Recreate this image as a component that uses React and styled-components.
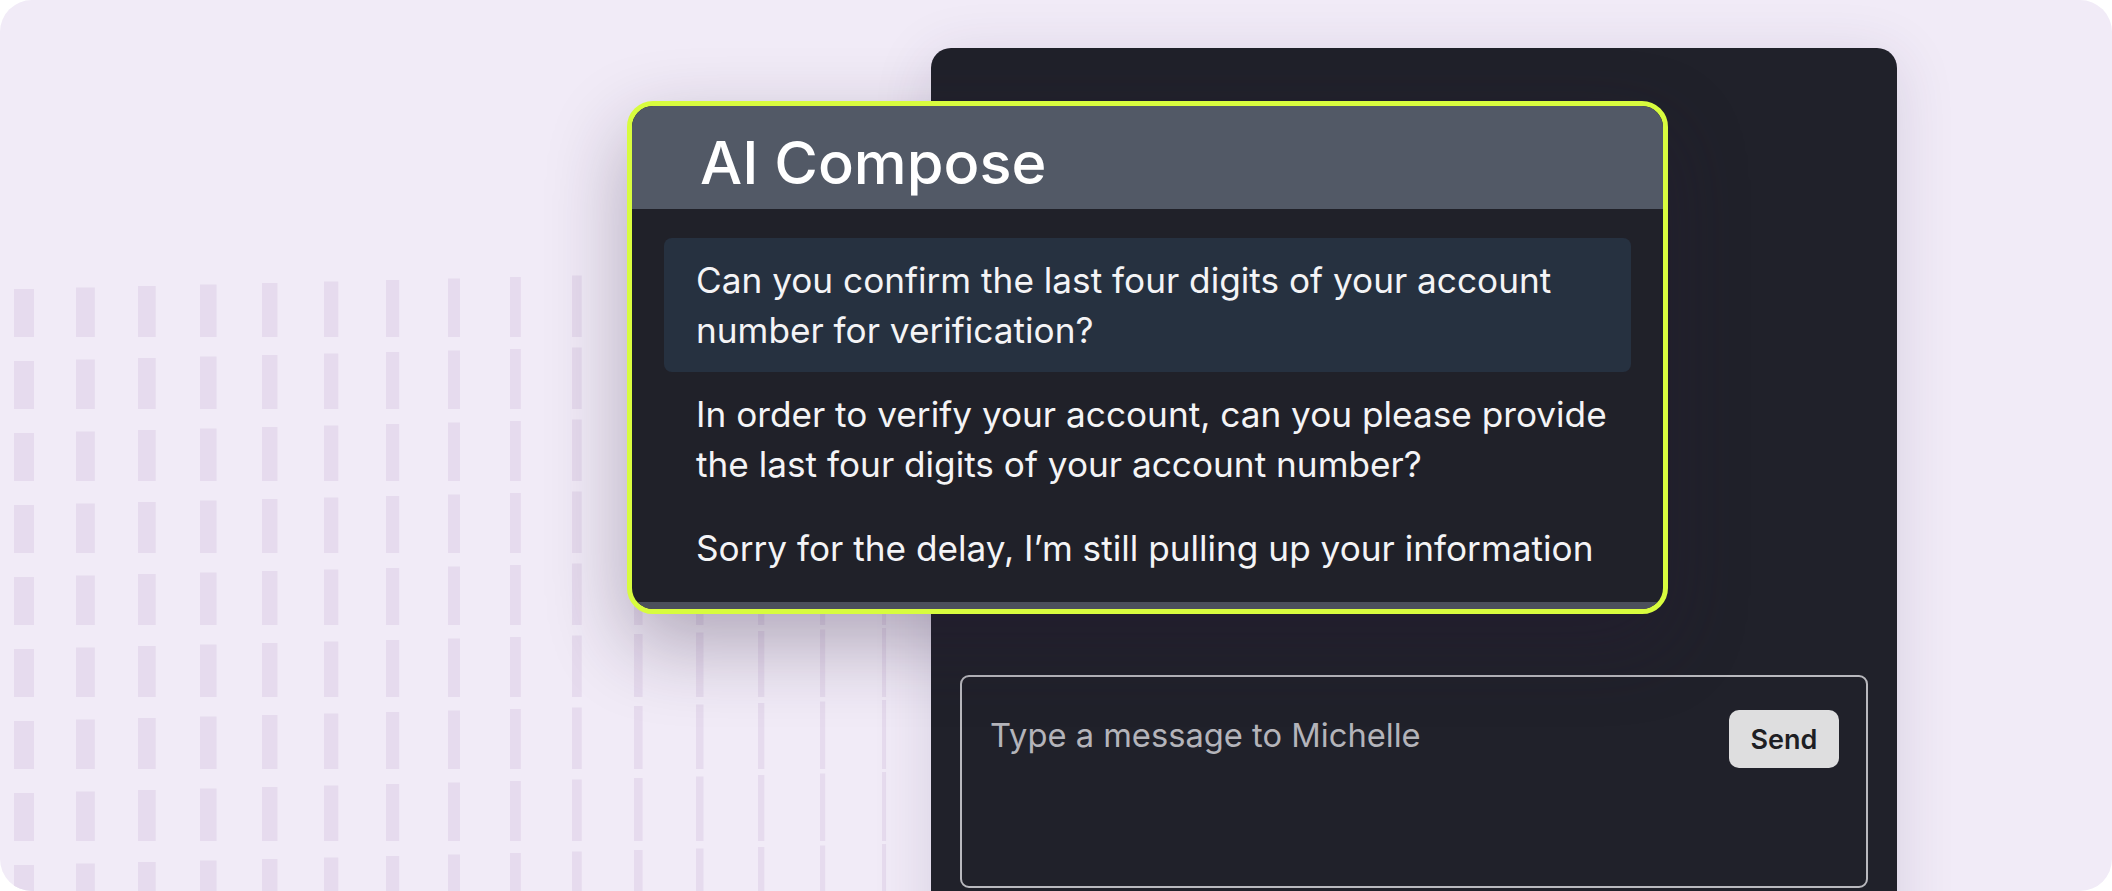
import React from 'react'
import styled, { createGlobalStyle } from 'styled-components'

const GlobalStyle = createGlobalStyle`
  html, body {
    margin: 0;
    padding: 0;
    background: #ffffff;
  }
  body {
    font-family: Inter, "Liberation Sans", sans-serif;
    -webkit-font-smoothing: antialiased;
  }
  * {
    box-sizing: border-box;
  }
`

const suggestions = [
  'Can you confirm the last four digits of your account number for verification?',
  'In order to verify your account, can you please provide the last four digits of your account number?',
  'Sorry for the delay, I\u2019m still pulling up your information',
]

// decorative dash grid on the left, columns get thinner and taller to the right
function DashPattern() {
  const bars = []
  for (let col = 0; col < 16; col++) {
    const x = 14 + col * 62
    const w = Math.max(3, 20 - col * 1.14)
    const h = Math.min(70, 48 + col * 1.5)
    for (let row = 0; row < 9; row++) {
      const bottom = 337 + row * 72
      bars.push(<rect key={col + '-' + row} x={x} y={bottom - h} width={w} height={h} />)
    }
  }
  return (
    <PatternSvg width="931" height="891" viewBox="0 0 931 891">
      <g fill="#e6dbee">{bars}</g>
    </PatternSvg>
  )
}

function App() {
  return (
    <>
      <GlobalStyle />
      <Frame>
        <DashPattern />
        <ChatPanel>
          <MessageArea />
          <Composer>
            <Placeholder>Type a message to Michelle</Placeholder>
            <SendButton>Send</SendButton>
          </Composer>
        </ChatPanel>
        <ComposePopup>
          <PopupHeader>AI Compose</PopupHeader>
          <SuggestionList>
            {suggestions.map((text, i) => (
              <Suggestion key={i} active={i === 0}>{text}</Suggestion>
            ))}
          </SuggestionList>
          <PopupFooter />
        </ComposePopup>
      </Frame>
    </>
  )
}

const Frame = styled.div`
  position: relative;
  width: 2112px;
  height: 891px;
  border-radius: 32px;
  background: #f1ebf7;
  overflow: hidden;
  padding: 48px 0 0 931px;
`

const PatternSvg = styled.svg`
  position: absolute;
  left: 0;
  top: 0;
  z-index: 0;
`

const ChatPanel = styled.div`
  position: relative;
  z-index: 1;
  width: 966px;
  height: 900px;
  background: #20212a;
  border-radius: 20px 20px 0 0;
  padding: 29px;
  display: flex;
  flex-direction: column;
  box-shadow: 0 10px 60px rgba(60, 40, 90, 0.14);
`

const MessageArea = styled.div`
  flex: none;
  height: 598px;
`

const Composer = styled.div`
  height: 213px;
  border: 2px solid #b9b9be;
  border-radius: 9px;
  padding: 33px 27px 0 28px;
  display: flex;
  justify-content: space-between;
  align-items: flex-start;
`

const Placeholder = styled.div`
  font-size: 32.7px;
  line-height: 40px;
  padding-top: 5px;
  color: #b4b4ba;
`

const SendButton = styled.button`
  width: 110px;
  height: 58px;
  border: none;
  border-radius: 10px;
  background: #dededf;
  color: #1e1f24;
  font-family: Inter, "Liberation Sans", sans-serif;
  font-size: 27px;
  font-weight: 600;
  cursor: pointer;
`

const ComposePopup = styled.div`
  position: absolute;
  z-index: 2;
  left: 627px;
  top: 101px;
  width: 1041px;
  height: 513px;
  border: 5px solid #d8fc3e;
  border-radius: 26px;
  background: #202129;
  overflow: hidden;
  display: flex;
  flex-direction: column;
  box-shadow: 0 30px 80px rgba(40, 25, 55, 0.32);
`

const PopupHeader = styled.div`
  flex: none;
  height: 103px;
  background: #525966;
  color: #ffffff;
  font-size: 59.5px;
  font-weight: 500;
  display: flex;
  align-items: center;
  padding-left: 68px;
  padding-top: 8px;
`

const SuggestionList = styled.div`
  flex: 1;
  padding: 29px 32px 0;
  display: flex;
  flex-direction: column;
`

const Suggestion = styled.div`
  padding: 17px 16px 17px 32px;
  border-radius: 8px;
  background: ${(props) => (props.active ? '#263140' : 'transparent')};
  color: #f4f4f6;
  font-size: 35.2px;
  line-height: 50px;
`

const PopupFooter = styled.div`
  flex: none;
  height: 7px;
  background: #4b4f5b;
`

export default App
